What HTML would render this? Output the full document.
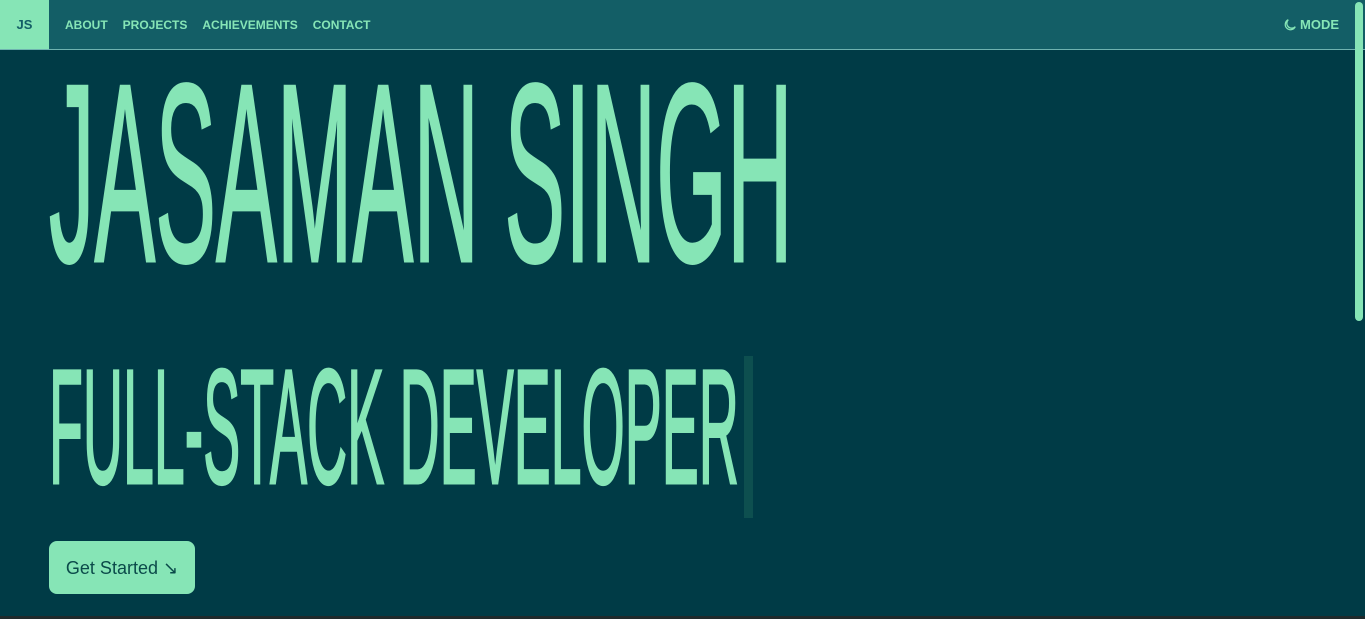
<!DOCTYPE html>
<html><head><meta charset="utf-8"><style>
html,body{margin:0;padding:0;width:1365px;height:619px;overflow:hidden;background:#003b46;font-family:"Liberation Sans",sans-serif}
.nav{position:absolute;left:0;top:0;width:1365px;height:49px;background:#135e66;border-bottom:1px solid #6fb3b0}
.js{position:absolute;left:0;top:0;width:49px;height:49px;background:#86e5b6;color:#135e66;font-weight:bold;font-size:13px;line-height:49px;text-align:center}
.links{position:absolute;left:65px;top:0;line-height:50px;font-size:12px;font-weight:bold;color:#86e5b6}
.links span{margin-right:15px}
.mode{position:absolute;right:26px;top:0;line-height:50px;font-size:13px;font-weight:bold;color:#86e5b6;display:flex;align-items:center;gap:3px}
.big{position:absolute;left:49px;color:#86e5b6;font-weight:normal;line-height:1;white-space:nowrap;transform-origin:0 0;-webkit-text-stroke:3px #86e5b6}
.l1{top:46px;font-size:254px;transform:scaleX(.3585)}
.l2{top:345px;font-size:163px;transform:scaleX(.3405)}
.cursor{position:absolute;left:744px;top:356px;width:9px;height:162px;background:#0d4f4f}
.btn{position:absolute;left:49px;top:541px;width:146px;height:53px;background:#86e5b6;border-radius:8px;color:#0b4a4a;font-size:18px;line-height:54px;text-align:center}
.sb{position:absolute;left:1355px;top:2px;width:8px;height:319px;background:#86e5b6;border-radius:4px}
.bot{position:absolute;left:0;top:616px;width:1365px;height:3px;background:#1f2a2c}
</style></head><body>
<div class="nav"><div class="js">JS</div>
<div class="links"><span>ABOUT</span><span>PROJECTS</span><span>ACHIEVEMENTS</span><span>CONTACT</span></div>
<div class="mode"><svg width="14" height="14" viewBox="0 0 24 24" fill="none" stroke="#86e5b6" stroke-width="2.2"><path d="M9 3a9 9 0 1 0 12 12A8 8 0 0 1 9 3z"/></svg>MODE</div>
</div>
<div class="big l1">JASAMAN SINGH</div>
<div class="big l2">FULL-STACK DEVELOPER</div>
<div class="cursor"></div>
<div class="btn">Get Started ↘</div>
<div class="sb"></div>
<div class="bot"></div>
</body></html>
